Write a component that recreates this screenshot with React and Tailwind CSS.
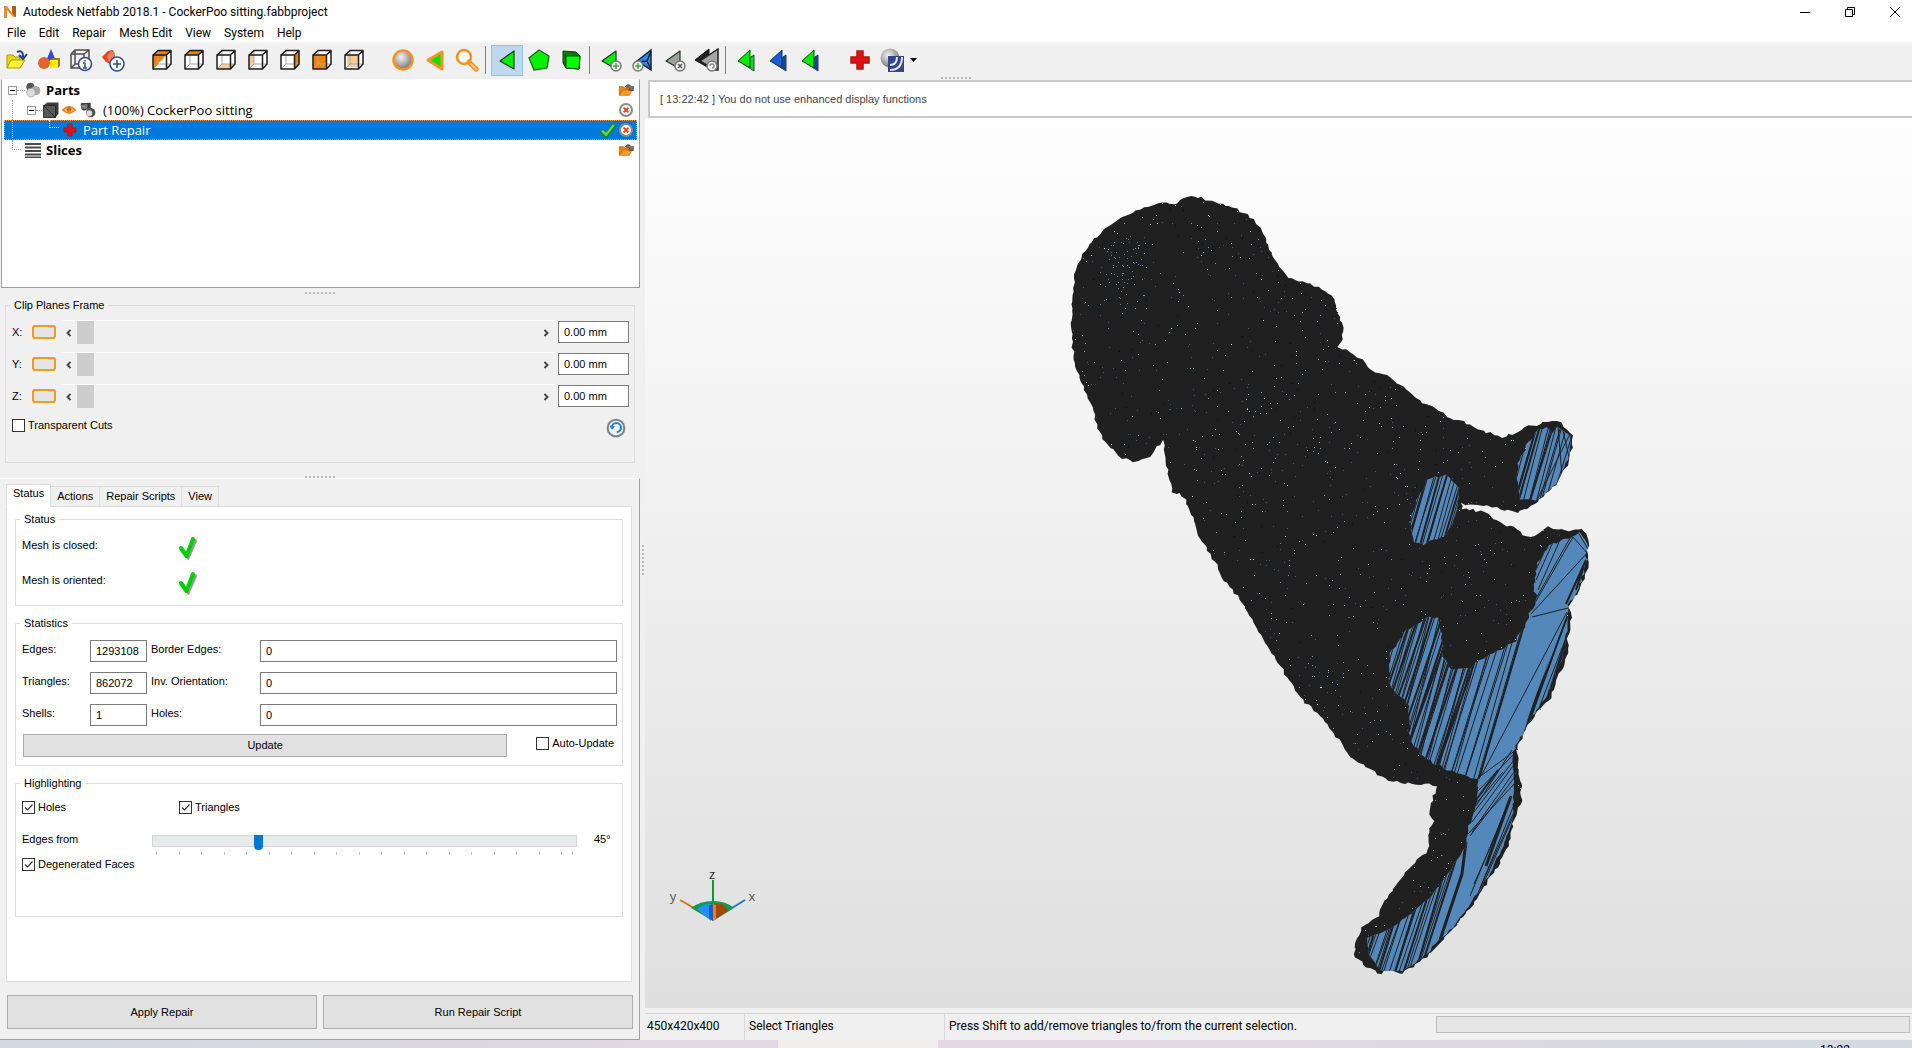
import { useState } from "react";
import clsx from "clsx";

const MENU = ["File", "Edit", "Repair", "Mesh Edit", "View", "System", "Help"];

// ---------------------------------------------------------------------------
// Mesh model
// ---------------------------------------------------------------------------

const OUTLINE = [
  [1192, 195], [1202, 198], [1215, 202], [1233, 207], [1248, 215], [1261, 228],
  [1268, 245], [1275, 260], [1288, 277], [1307, 283], [1322, 289], [1334, 299],
  [1338, 313], [1343, 327], [1343, 338], [1338, 346], [1352, 355], [1363, 360],
  [1372, 370], [1387, 376], [1403, 388], [1420, 401], [1433, 407], [1447, 416],
  [1467, 423], [1483, 431], [1502, 437], [1513, 434], [1525, 427], [1537, 425],
  [1547, 421], [1560, 423], [1567, 429], [1573, 436], [1572, 448], [1567, 465],
  [1558, 482], [1548, 492], [1538, 502], [1527, 509], [1517, 512], [1500, 509],
  [1483, 505], [1470, 505], [1462, 503], [1462, 509], [1473, 510], [1488, 513],
  [1500, 523], [1517, 529], [1527, 537], [1535, 536], [1547, 527], [1558, 530],
  [1570, 531], [1582, 529], [1588, 537], [1588, 550], [1589, 563], [1585, 580],
  [1575, 597], [1568, 608], [1571, 617], [1568, 640], [1567, 657], [1557, 677],
  [1551, 697], [1538, 712], [1525, 730], [1517, 748], [1518, 767], [1521, 787],
  [1522, 800], [1513, 823], [1507, 850], [1493, 873], [1480, 895], [1463, 917],
  [1443, 940], [1427, 957], [1413, 967], [1403, 973], [1385, 971], [1382, 974],
  [1367, 967], [1355, 957], [1355, 943], [1362, 927], [1378, 917], [1382, 905],
  [1392, 892], [1405, 873], [1420, 857], [1428, 850], [1430, 828], [1434, 822],
  [1429, 810], [1435, 793], [1436, 785], [1420, 784], [1393, 782], [1370, 770],
  [1350, 757], [1340, 743], [1333, 730], [1317, 713], [1300, 697], [1272, 653],
  [1244, 606], [1225, 580], [1212, 558], [1198, 535], [1193, 517], [1185, 500],
  [1180, 494], [1172, 492], [1169, 477], [1164, 453], [1164, 441], [1158, 447],
  [1150, 457], [1133, 462], [1122, 458], [1105, 442], [1095, 420], [1092, 407],
  [1083, 387], [1076, 367], [1072, 343], [1071, 327], [1073, 300], [1076, 267],
  [1087, 247], [1105, 228], [1122, 217], [1147, 206], [1162, 203], [1178, 203],
  [1183, 198],
];

const FRONT_PAW = [
  [1547, 427], [1552, 433], [1558, 426], [1571, 436], [1570, 450], [1565, 467],
  [1557, 483], [1538, 500], [1520, 499], [1517, 480], [1518, 463], [1528, 443],
  [1538, 430],
];

const SECOND_PAW = [
  [1447, 474], [1459, 487], [1457, 513], [1445, 537], [1423, 544], [1415, 542],
  [1410, 523], [1417, 497], [1427, 480],
];

const BELLY = [
  [1430, 616], [1438, 618], [1442, 633], [1442, 657], [1453, 670], [1470, 668],
  [1487, 657], [1513, 643], [1523, 630], [1530, 613], [1538, 597], [1533, 590],
  [1538, 563], [1550, 545], [1573, 537], [1580, 533], [1587, 543], [1586, 567],
  [1577, 592], [1567, 608], [1567, 630], [1563, 657], [1548, 693], [1530, 720],
  [1516, 747], [1480, 778], [1467, 777], [1433, 763], [1412, 745], [1408, 720],
  [1408, 703], [1390, 687], [1390, 653], [1407, 630],
];

const TAIL = [
  [1516, 745], [1512, 755], [1514, 777], [1513, 817], [1505, 843], [1492, 870],
  [1473, 900], [1453, 927], [1427, 953], [1403, 971], [1380, 970], [1368, 953],
  [1368, 938], [1397, 925], [1430, 898], [1453, 867], [1465, 847], [1468, 830],
  [1477, 800], [1478, 777],
];

// small deterministic generator, so that the model is the same on every render
const rng = (seed) => () => {
  seed = (seed * 1664525 + 1013904223) % 4294967296;
  return seed / 4294967296;
};

const toPath = (pts) => "M" + pts.map((p) => p.join(" ")).join("L") + "Z";

const roughen = (pts, amount, seed) => {
  const rand = rng(seed);
  const out = [];
  pts.forEach(([x, y], i) => {
    const [nx, ny] = pts[(i + 1) % pts.length];
    const steps = Math.max(1, Math.round(Math.hypot(nx - x, ny - y) / 4));
    for (let s = 0; s < steps; s++) {
      const t = s / steps;
      out.push([
        Math.round((x + (nx - x) * t + (rand() - 0.5) * amount) * 10) / 10,
        Math.round((y + (ny - y) * t + (rand() - 0.5) * amount) * 10) / 10,
      ]);
    }
  });
  return out;
};

const inside = (pts, x, y) => {
  let hit = false;
  for (let i = 0, j = pts.length - 1; i < pts.length; j = i++) {
    const [xi, yi] = pts[i];
    const [xj, yj] = pts[j];
    if (yi > y !== yj > y && x < ((xj - xi) * (y - yi)) / (yj - yi) + xi) {
      hit = !hit;
    }
  }
  return hit;
};

// slanted edges between two heights; x0..x1 is measured on the top edge
const slants = (x0, x1, y0, y1, lean, step, seed) => {
  const rand = rng(seed);
  let d = "";
  for (let x = x0; x < x1; x += step * (0.4 + rand() * 1.3)) {
    const run = (y1 - y0) * (lean + (rand() - 0.5) * 0.05);
    d += `M${x.toFixed(1)} ${y0}L${(x - run).toFixed(1)} ${y1}`;
  }
  return d;
};

const speckles = (count, seed, box) => {
  const rand = rng(seed);
  const blues = [FRONT_PAW, SECOND_PAW, BELLY, TAIL];
  let d = "";
  for (let i = 0; i < count; i++) {
    const x = Math.round(box[0] + rand() * box[2]);
    const y = Math.round(box[1] + rand() * box[3]);
    if (inside(OUTLINE, x, y) && !blues.some((b) => inside(b, x, y))) {
      d += `M${x} ${y}h1v1h-1z`;
    }
  }
  return d;
};

const OUTLINE_PATH = toPath(roughen(OUTLINE, 2.6, 7));
const REGIONS = [
  { id: "front", path: toPath(roughen(FRONT_PAW, 2, 3)) },
  { id: "second", path: toPath(roughen(SECOND_PAW, 3, 4)) },
  { id: "belly", path: toPath(roughen(BELLY, 3, 5)) },
  { id: "tail", path: toPath(roughen(TAIL, 2, 6)) },
];

const BOX = [1070, 195, 520, 780];

function Model() {
  return (
    <g>
      <defs>
        {REGIONS.map((r) => (
          <clipPath key={r.id} id={`clip-${r.id}`}>
            <path d={r.path} />
          </clipPath>
        ))}
        <clipPath id="clip-belly-left">
          <path d="M1380 610H1528L1478 780H1380Z" />
        </clipPath>
        <clipPath id="clip-belly-right">
          <path d="M1568 612L1600 612V760H1514L1534 700Z" />
        </clipPath>
      </defs>
      <path d={OUTLINE_PATH} fill="#202020" />
      <g shapeRendering="crispEdges">
        <path d={speckles(1200, 11, BOX)} fill="#34597c" />
        <path d={speckles(800, 23, BOX)} fill="#6c9cc6" />
        <path d={speckles(650, 37, BOX)} fill="#bfe6f5" />
        <path d={speckles(40, 41, [1110, 236, 32, 46])} fill="#4d7eae" />
        <path d={speckles(25, 47, [1100, 250, 30, 54])} fill="#4d7eae" />
        <path d={speckles(30, 43, [1240, 390, 120, 70])} fill="#74a8d0" />
        <path d={speckles(320, 59, BOX)} fill="#0b0b0b" />
      </g>
      {REGIONS.map((r) => (
        <path key={r.id} d={r.path} fill="#5488ba" />
      ))}

      <g stroke="#202020" fill="none">
        <g clipPath="url(#clip-front)">
          <path d={slants(1526, 1566, 422, 504, 0.28, 4, 5)} />
          <path d={slants(1538, 1562, 422, 504, 0.3, 8, 8)} strokeWidth="2" />
          <path d="M1562 426L1570 462M1558 426L1562 476M1570 434L1536 502" />
          <path d={slants(1562, 1600, 422, 504, 0.3, 6, 2)} />
        </g>
        <g clipPath="url(#clip-second)">
          <path d={slants(1422, 1490, 472, 546, 0.3, 4, 9)} />
          <path d={slants(1428, 1480, 472, 546, 0.3, 14, 12)} strokeWidth="2" />
        </g>
        <g clipPath="url(#clip-belly)">
          <g clipPath="url(#clip-belly-left)">
            <path d={slants(1396, 1530, 612, 782, 0.3, 4, 15)} />
            <path d={slants(1400, 1500, 612, 782, 0.34, 9, 17)} strokeWidth="2" />
            <path d={slants(1430, 1480, 612, 782, 0.26, 8, 19)} />
          </g>
          <g clipPath="url(#clip-belly-right)">
            <path d={slants(1560, 1620, 612, 760, 0.4, 4, 21)} />
            <path d={slants(1564, 1620, 612, 760, 0.34, 6, 22)} strokeWidth="2" />
          </g>
          <path d="M1527 615L1478 782" strokeWidth="2" />
          <path d="M1567 612L1480 778M1532 617L1568 608" />
          <path d="M1573 537L1532 608M1588 552L1531 614M1573 537L1587 553M1578 532L1588 549" />
          <path d="M1560 540L1538 590M1553 542L1536 580M1547 546L1536 570M1570 538L1534 602" />
          <path d="M1586 560L1566 604M1584 566L1576 590M1533 565V596" strokeWidth="2" />
        </g>
        <g clipPath="url(#clip-tail)">
          <path d="M1516 750L1478 778M1514 754L1477 792M1514 760L1474 812M1513 766L1472 822M1512 750L1476 806" />
          <path d="M1514 772L1472 832M1514 778L1470 836M1514 784L1468 834M1503 772L1474 806" />
          <path d="M1498 770L1476 800" strokeWidth="2" />
          <path d="M1511 796L1486 866" strokeWidth="3" />
          <path d="M1511 796L1470 896M1504 816L1474 884M1514 812L1480 888" />
          <path d={slants(1516, 1530, 800, 920, 0.42, 4, 25)} />
          <path d="M1466 842L1462 874L1440 940" strokeWidth="3" />
          <path d={slants(1396, 1464, 842, 976, 0.34, 4, 27)} />
          <path d={slants(1400, 1466, 842, 976, 0.3, 12, 29)} strokeWidth="2" />
        </g>
      </g>
    </g>
  );
}

function AxisGizmo() {
  return (
    <g>
      <path d="M680 900L694 908" stroke="#d9730d" strokeWidth="2" />
      <path d="M745 900L732 908" stroke="#1f78c1" strokeWidth="2" />
      <path d="M691 908Q700 901 713 901Q726 901 734 908L713 921Z" fill="#149a50" />
      <path d="M697 909Q703 904 711 904V921Z" fill="#1e90ff" />
      <path d="M709 905H713V921L709 918Z" fill="#1560bd" />
      <path d="M713 904H722Q726 907 728 911L714 920Z" fill="#a04808" />
      <path d="M713 904L716 905V919L713 921Z" fill="#ff7a0f" />
      <path d="M713 880V904" stroke="#149440" strokeWidth="2" />
      <g fontFamily="Open Sans, sans-serif" fontSize="13" fill="#555555" textAnchor="middle">
        <text x="673" y="901">y</text>
        <text x="752" y="901">x</text>
        <text x="712" y="879" fill="#222222">z</text>
      </g>
    </g>
  );
}

// ---------------------------------------------------------------------------
// Icons
// ---------------------------------------------------------------------------

function Icon({ children, className }) {
  return (
    <svg viewBox="0 0 24 24" className={clsx("shrink-0", className || "size-6")} aria-hidden="true">
      {children}
    </svg>
  );
}

const Cube = ({ face }) => (
  <Icon>
    <path d="M3 7L8 2.5H21V16L16.500 21H3Z" fill="#ffffff" />
    {face}
    <path d="M8 3V16M8 16H21M8 16L3 21" stroke="#a9a9b4" strokeWidth="1" fill="none" />
    <path d="M3 7H16.500V21H3ZM3 7L8 2.500H21L16.500 7M21 2.500V16L16.500 21" stroke="#1d1d1d" strokeWidth="1.500" fill="none" strokeLinejoin="round" />
  </Icon>
);

const Triangle = ({ fill = "#00f000" }) => (
  <path d="M3 13L17 3V21Z" fill={fill} stroke="#1c3a1c" strokeWidth="1.200" strokeLinejoin="round" />
);

const Badge = ({ cx = 17, sign, color = "#38a838" }) => (
  <g>
    <circle cx={cx} cy="18" r="5" fill="#f4f4f4" stroke="#777777" strokeWidth="1.500" />
    <path d={sign} stroke={color} strokeWidth="1.500" fill="none" />
  </g>
);

const Layers = ({ front, back }) => (
  <Icon>
    <path d="M7 15L19 7V23Z" fill={back} stroke="#26365a" />
    <path d="M3 13L15 2V20Z" fill={front} stroke="#203820" strokeLinejoin="round" />
  </Icon>
);

const RedCross = ({ className }) => (
  <Icon className={className}>
    <path d="M9 3H15V9H21V15H15V21H9V15H3V9H9Z" fill="#e80f0f" stroke="#a51a1a" strokeWidth="1.500" />
  </Icon>
);

const FILE_TOOLS = [
  {
    name: "Open",
    icon: (
      <Icon>
        <path d="M2 20V7H8L10 9H15V12" fill="#e6d800" stroke="#a79c00" />
        <path d="M2 20L6 12H20L15 20Z" fill="#fff23a" stroke="#a79c00" />
        <path d="M12 4Q18 1 18 9M14 7L18 11L22 6" stroke="#23408f" strokeWidth="2" fill="none" />
      </Icon>
    ),
  },
  {
    name: "Add primitive",
    icon: (
      <Icon>
        <path d="M14 1L19 13H9Z" fill="#3a49d6" />
        <circle cx="7" cy="15" r="6" fill="#e2662a" />
        <path d="M13 12L16 10H23V18L21 20H13Z" fill="#8c8400" />
        <path d="M13 12H21V20H13Z" fill="#ffee00" />
      </Icon>
    ),
  },
  {
    name: "Part info",
    icon: (
      <Icon>
        <path d="M2 6L6 2H20V12M2 6H15V12M2 6V20H12M6 2V16L2 20M15 6L20 2M6 16H12" fill="none" stroke="#4d4d4d" strokeWidth="1.500" />
        <circle cx="16" cy="16" r="6.500" fill="#ffffff" stroke="#34488f" strokeWidth="1.500" />
        <path d="M16 15V20M14 15H16M14 20H18M16 12V13.500" stroke="#34488f" strokeWidth="1.500" />
      </Icon>
    ),
  },
  {
    name: "New part",
    icon: (
      <Icon>
        <path d="M1 9L7 3L12 2L14 8L10 16L5 14Z" fill="#e2451f" />
        <path d="M6 8L10 3L14 5L11 14L7 13Z" fill="#f07e5c" />
        <circle cx="16" cy="16" r="7" fill="#ffffff" stroke="#34488f" strokeWidth="1.500" />
        <path d="M16 12V20M12 16H20" stroke="#34488f" strokeWidth="1.500" />
      </Icon>
    ),
  },
];

const VIEW_TOOLS = [
  { name: "Isometric", icon: <Cube face={<path d="M3 7H16.500L3 21ZM3 7L8 2.500H21L16.500 7Z" fill="#ee7f10" />} /> },
  { name: "Top", icon: <Cube face={<path d="M3 7L8 2.500H21L16.500 7Z" fill="#ee7f10" />} /> },
  { name: "Bottom", icon: <Cube face={<path d="M3 21L8 16H21L16.500 21Z" fill="#fbc995" />} /> },
  { name: "Left", icon: <Cube face={<path d="M3 7L8 2.500V16L3 21Z" fill="#fbc995" />} /> },
  { name: "Right", icon: <Cube face={<path d="M16.500 7L21 2.500V16L16.500 21Z" fill="#ee7f10" />} /> },
  { name: "Front", icon: <Cube face={<path d="M3 7H16.500V21H3Z" fill="#f58200" />} /> },
  { name: "Back", icon: <Cube face={<path d="M5 7H16.500V19H5Z" fill="#fbc995" />} /> },
];

const ZOOM_TOOLS = [
  {
    name: "Zoom all",
    icon: (
      <Icon>
        <circle cx="12" cy="12" r="9.500" fill="url(#ball)" stroke="#f7921e" strokeWidth="2.500" />
      </Icon>
    ),
  },
  {
    name: "Zoom selection",
    icon: (
      <Icon>
        <path d="M5 12L19 4V21Z" fill="#00e600" stroke="#f7921e" strokeWidth="3" strokeLinejoin="round" />
      </Icon>
    ),
  },
  {
    name: "Zoom",
    icon: (
      <Icon>
        <circle cx="9" cy="9" r="7" fill="#ffffff" stroke="#f7921e" strokeWidth="2.500" />
        <path d="M14 14L21 21" stroke="#f7921e" strokeWidth="5" strokeLinecap="round" />
        <path d="M16 16L21 21" stroke="#ffc57a" strokeWidth="2" strokeLinecap="round" />
      </Icon>
    ),
  },
];

const SELECT_TOOLS = [
  { name: "Select triangles", active: true, icon: <Icon><g transform="translate(2 0)"><Triangle /></g></Icon> },
  {
    name: "Select surfaces",
    icon: (
      <Icon>
        <path d="M12 2L22 8L20 20L7 22L2 10Z" fill="#00f000" stroke="#1c5a1c" strokeWidth="1.200" />
      </Icon>
    ),
  },
  {
    name: "Select shells",
    icon: (
      <Icon>
        <path d="M4 3L17 4L21 8L20 21L7 20L4 15Z" fill="#0a7a0a" stroke="#0d3a0d" />
        <path d="M7 8L21 8L20 21L7 20Z" fill="#00ff00" stroke="#0d4a0d" />
      </Icon>
    ),
  },
];

const EDIT_TOOLS = [
  { name: "Grow selection", icon: <Icon><Triangle /><Badge sign="M17 15V21M14 18H20" /></Icon> },
  {
    name: "Add node",
    icon: (
      <Icon>
        <path d="M6 13L20 2V22Z" fill="#2a8be8" stroke="#14253d" strokeWidth="1.500" />
        <path d="M20 3L16 13L20 21M16 13L7 14" stroke="#14253d" fill="none" strokeWidth="1.500" />
        <Badge cx={7} sign="M7 15V21M4 18H10" />
      </Icon>
    ),
  },
  { name: "Remove triangles", icon: <Icon><Triangle fill="#a0a0a0" /><Badge sign="M15 16L19 20M19 16L15 20" color="#555555" /></Icon> },
  {
    name: "Invert",
    icon: (
      <Icon>
        <path d="M0 12L14 1V20Z" fill="#222222" stroke="#111111" strokeLinejoin="round" />
        <path d="M5 13L23 1V22H20Z" fill="#a6a6a6" stroke="#222222" strokeWidth="1.500" />
        <Badge sign="M15 18A2 2 0 1 1 17 20" color="#888888" />
      </Icon>
    ),
  },
];

const LAYER_TOOLS = [
  { name: "Show selection", icon: <Layers front="#00ee00" back="#19d819" /> },
  { name: "Show part", icon: <Layers front="#0f5fe0" back="#1448a8" /> },
  { name: "Show both", icon: <Layers front="#00ee00" back="#1448a8" /> },
];

const Folder = () => (
  <Icon className="size-4">
    <path d="M2 20V7H8L10 9H19V12" fill="#e58315" stroke="#a55a00" />
    <path d="M2 20L7 12H21L17 20Z" fill="#ff9a2a" stroke="#b96500" />
    <path d="M11 7Q14 2 18 5L21 8L23 6V13L16 12L18 10Q16 7 13 8Z" fill="#777777" stroke="#333333" />
  </Icon>
);

const CloseCircle = () => (
  <Icon className="size-4">
    <circle cx="12" cy="12" r="9" fill="#ffffff" stroke="#8b8b8b" strokeWidth="3" />
    <path d="M8.500 8.500L15.500 15.500M15.500 8.500L8.500 15.500" stroke="#e8430e" strokeWidth="3" />
  </Icon>
);

const BigCheck = () => (
  <svg viewBox="0 0 20 24" className="h-6 w-5" role="img" aria-label="OK">
    <path d="M4 14L10 21L17 5" stroke="#999999" strokeWidth="4" fill="none" strokeLinecap="round" />
    <path d="M3 12L8.500 20L15 3" stroke="#00d000" strokeWidth="4" fill="none" strokeLinecap="round" strokeLinejoin="round" />
  </svg>
);

// ---------------------------------------------------------------------------
// Building blocks
// ---------------------------------------------------------------------------

function ToolGroup({ tools }) {
  return (
    <div className="flex">
      {tools.map((t) => (
        <button
          key={t.name}
          type="button"
          aria-label={t.name}
          className={clsx(
            "flex h-[31px] w-8 items-center justify-center border",
            t.active ? "border-[#92c4ea] bg-[#bcd9f0]" : "border-transparent"
          )}
        >
          {t.icon}
        </button>
      ))}
    </div>
  );
}

const Separator = () => <div className="h-7 w-px bg-[#858585]" />;

function Grip({ vertical }) {
  return (
    <div
      className={clsx(
        "flex gap-0.5",
        vertical ? "flex-col" : "justify-center"
      )}
    >
      {Array.from({ length: 8 }, (_, i) => (
        <span key={i} className="size-0.5 bg-[#b8b8b8]" />
      ))}
    </div>
  );
}

function Check({ label, defaultChecked, className }) {
  return (
    <label className={clsx("flex items-center gap-[3px] leading-[18px]", className)}>
      <span className="relative block size-[13px]">
        <input
          type="checkbox"
          defaultChecked={defaultChecked}
          className="peer block size-[13px] appearance-none border border-[#333333] bg-white"
        />
        <svg viewBox="0 0 13 13" className="pointer-events-none absolute inset-0 hidden size-[13px] peer-checked:block">
          <path d="M3 6.500L5.500 9L10.500 3.500" stroke="#333333" strokeWidth="1.200" fill="none" />
        </svg>
      </span>
      {label}
    </label>
  );
}

function Group({ title, className, children }) {
  return (
    <fieldset className={clsx("border border-[#dcdcdc]", className)}>
      <legend className="-ml-0.5 px-1 leading-[14px]">{title}</legend>
      {children}
    </fieldset>
  );
}

function ClipRow({ axis }) {
  return (
    <div className="flex h-6 items-center">
      <span className="w-5 leading-[18px]">{axis}:</span>
      <button
        type="button"
        aria-label={`Toggle ${axis} plane`}
        className="h-[14px] w-6 rounded-[3px] border-2 border-[#f39a1c] bg-[#e4e4e4]"
      />
      <div className="ml-1 flex h-6 flex-1 items-center border-t border-white">
        <button type="button" aria-label={`${axis} less`} className="flex w-[17px] justify-center">
          <svg viewBox="0 0 8 10" className="h-2 w-1.5">
            <path d="M6 1L2 5L6 9" stroke="#444444" strokeWidth="2.500" fill="none" />
          </svg>
        </button>
        <input
          type="range"
          aria-label={`${axis} clip position`}
          min="0"
          max="100"
          defaultValue="0"
          className="h-[23px] min-w-0 flex-1 appearance-none bg-transparent [&::-webkit-slider-thumb]:h-[23px] [&::-webkit-slider-thumb]:w-[17px] [&::-webkit-slider-thumb]:appearance-none [&::-webkit-slider-thumb]:bg-[#cdcdcd]"
        />
        <button type="button" aria-label={`${axis} more`} className="flex w-[17px] justify-center">
          <svg viewBox="0 0 8 10" className="h-2 w-1.5">
            <path d="M2 1L6 5L2 9" stroke="#444444" strokeWidth="2.500" fill="none" />
          </svg>
        </button>
      </div>
      <input
        type="text"
        aria-label={`${axis} clip value`}
        defaultValue="0.00 mm"
        className="ml-1 h-[22px] w-[71px] border border-[#7a7a7a] bg-white px-[5px]"
      />
    </div>
  );
}

function Stat({ id, label, value, second }) {
  return (
    <>
      <label htmlFor={id} className={clsx("leading-[18px]", second && "pl-1")}>
        {label}
      </label>
      <input
        id={id}
        type="text"
        readOnly
        value={value}
        className="h-[22px] w-full min-w-0 border border-[#7a7a7a] bg-white px-[5px]"
      />
    </>
  );
}

// ---------------------------------------------------------------------------
// Panels
// ---------------------------------------------------------------------------

function TitleBar() {
  return (
    <header className="bg-white">
      <div className="flex h-6 items-center">
        <svg viewBox="0 0 16 16" className="ml-0.5 size-4" aria-hidden="true">
          <path d="M2 14V2H5L10 9V2H14V13H11L5 6V14Z" fill="#e58a35" />
          <path d="M10 2H14V13L10 9Z" fill="#b35a12" />
        </svg>
        <h1 className="ml-[5px] flex-1">Autodesk Netfabb 2018.1 - CockerPoo sitting.fabbproject</h1>
        <button type="button" aria-label="Minimize" className="flex h-5 w-[45px] items-center justify-center">
          <svg viewBox="0 0 10 10" className="size-[10px]"><path d="M0 5.500H10" stroke="#000000" /></svg>
        </button>
        <button type="button" aria-label="Restore" className="flex h-5 w-[45px] items-center justify-center">
          <svg viewBox="0 0 10 10" className="size-[10px]" fill="none" stroke="#000000">
            <path d="M0.500 2.500H7.500V9.500H0.500ZM2.500 2.500V0.500H9.500V7.500H7.500" />
          </svg>
        </button>
        <button type="button" aria-label="Close" className="mr-[-5px] flex h-5 w-[45px] items-center justify-center">
          <svg viewBox="0 0 10 10" className="size-[10px]"><path d="M0 0L10 10M10 0L0 10" stroke="#000000" /></svg>
        </button>
      </div>
      <nav className="flex h-[17px] items-center gap-[13px] pl-[7px]">
        {MENU.map((m) => (
          <button key={m} type="button">
            {m}
          </button>
        ))}
      </nav>
    </header>
  );
}

function Toolbar() {
  return (
    <div className="relative flex h-[38px] items-center border-t-2 border-[#f8f8f8] pb-0.5 pl-px">
      <svg className="size-0" aria-hidden="true">
        <defs>
          <radialGradient id="ball" cx="0.4" cy="0.35" r="0.7">
            <stop offset="0" stopColor="#f2f2f2" />
            <stop offset="1" stopColor="#6f6f6f" />
          </radialGradient>
        </defs>
      </svg>
      <ToolGroup tools={FILE_TOOLS} />
      <div className="ml-[17px]">
        <ToolGroup tools={VIEW_TOOLS} />
      </div>
      <div className="ml-[17px] mr-0.5">
        <ToolGroup tools={ZOOM_TOOLS} />
      </div>
      <Separator />
      <div className="ml-[5px] mr-0.5">
        <ToolGroup tools={SELECT_TOOLS} />
      </div>
      <Separator />
      <div className="ml-[5px] mr-0.5">
        <ToolGroup tools={EDIT_TOOLS} />
      </div>
      <Separator />
      <div className="ml-[5px]">
        <ToolGroup tools={LAYER_TOOLS} />
      </div>
      <button type="button" aria-label="Repair part" className="ml-[17px] flex h-[31px] w-8 items-center justify-center">
        <RedCross className="size-6" />
      </button>
      <button type="button" aria-label="Display mode" className="flex h-[31px] items-center gap-1.5 pl-1">
        <Icon>
          <circle cx="10" cy="10" r="9.500" fill="url(#ball)" />
          <path d="M8 8H24V24H8Z" fill="#33458c" />
          <path d="M10 17Q17 17 17 9M10 22Q22 22 22 9" stroke="#e4e8f5" strokeWidth="2" fill="none" />
        </Icon>
        <svg viewBox="0 0 7 4" className="h-1 w-[7px]"><path d="M0 0H7L3.500 4Z" fill="#000000" /></svg>
      </button>
      <div className="absolute inset-x-0 bottom-0">
        <Grip />
      </div>
    </div>
  );
}

const Expander = () => (
  <button type="button" aria-label="Collapse" className="size-[9px] shrink-0 border border-[#9a9a9a] bg-white">
    <svg viewBox="0 0 7 7" className="size-[7px]"><path d="M1 3.500H6" stroke="#000000" /></svg>
  </button>
);

function PartsTree() {
  return (
    <ul className="h-[209px] border border-[#9c9c9c] border-t-transparent bg-white px-0.5 text-[13px] leading-5">
      <li className="flex h-5 items-center pl-1 pr-[3px]">
        <Expander />
        <span className="w-2 border-t border-dotted border-[#a0a0a0]" />
        <Icon className="size-4">
          <circle cx="8" cy="7" r="6" fill="#555555" />
          <circle cx="16" cy="13" r="7" fill="#a8a8a8" />
          <circle cx="9" cy="16" r="6.500" fill="#dcdcdc" stroke="#9a9a9a" />
        </Icon>
        <b className="ml-[5px] flex-1">Parts</b>
        <Folder />
      </li>
      <li className="flex h-5 items-center pr-[3px]">
        <span className="h-5 w-[9px] border-r border-dotted border-[#a0a0a0]" />
        <span className="ml-[14px] flex items-center">
          <Expander />
        </span>
        <span className="w-1.5 border-t border-dotted border-[#a0a0a0]" />
        <Icon className="size-[18px]">
          <path d="M2 6L7 2H22V17L18 22H2Z" fill="#3c3c3c" />
          <path d="M2 6H18V22H2ZM2 6L18 22" fill="#585858" stroke="#222222" />
        </Icon>
        <Icon className="ml-0.5 h-4 w-3.5">
          <path d="M1 12Q12 1 23 12Q12 22 1 12Z" fill="#fbb366" stroke="#e8861a" strokeWidth="2.500" />
          <circle cx="12" cy="11" r="4" fill="#d06c06" />
        </Icon>
        <Icon className="ml-1 size-4">
          <path d="M1 2L16 1V9L6 13L2 11Z" fill="#3a3a3a" />
          <path d="M1 5L11 3V10H3Z" fill="#828282" />
          <circle cx="16" cy="16" r="7" fill="#4e4e4e" />
          <circle cx="14" cy="17" r="4.500" fill="#dddddd" />
        </Icon>
        <span className="ml-[7px] flex-1">(100%) CockerPoo sitting</span>
        <CloseCircle />
      </li>
      <li className="flex h-5 items-center bg-[#0078d7] pr-[3px] text-white outline-1 -outline-offset-1 outline-dotted outline-[#e39a52]">
        <span className="h-5 w-[9px] border-r border-dotted border-[#c0d8f0]" />
        <span className="ml-9 h-2 w-[10px] self-start border-b border-l border-dotted border-white" />
        <RedCross className="ml-[3px] size-4" />
        <span className="ml-[5px] flex-1">Part Repair</span>
        <Icon className="mr-0.5 size-4">
          <path d="M2 13L9 20L22 4" stroke="#2c7a16" strokeWidth="6" fill="none" />
          <path d="M3 13L9 19L21 4" stroke="#5fdc3a" strokeWidth="3.500" fill="none" />
        </Icon>
        <CloseCircle />
      </li>
      <li className="flex h-5 items-center pr-[3px]">
        <span className="h-2.5 w-[17px] self-start pl-2">
          <span className="block h-2.5 border-b border-l border-dotted border-[#a0a0a0]" />
        </span>
        <svg viewBox="0 0 16 15" className="ml-1 h-[15px] w-4" aria-hidden="true">
          <path d="M0 1H16M0 4.500H16M0 8H16M0 11.500H16M0 14.500H16" stroke="#4a4a4a" strokeWidth="2" />
        </svg>
        <b className="ml-[5px] flex-1">Slices</b>
        <Folder />
      </li>
    </ul>
  );
}

function ClipPlanes() {
  return (
    <Group title="Clip Planes Frame" className="mx-[5px] h-[165px] px-1.5 pr-[5px]">
      <div className="flex flex-col gap-2 pt-2">
        <ClipRow axis="X" />
        <ClipRow axis="Y" />
        <ClipRow axis="Z" />
        <div className="flex h-[22px] items-start justify-between pr-[3px]">
          <Check label="Transparent Cuts" />
          <button type="button" aria-label="Reset clip planes" className="self-end">
            <Icon className="size-5">
              <circle cx="12" cy="12" r="10" fill="#f2f2f2" stroke="#7d8690" strokeWidth="2.500" />
              <path d="M7 11A5.500 5.500 0 1 1 13 17" stroke="#1f86e0" strokeWidth="2.500" fill="none" />
              <path d="M4 9L7 14L11 10Z" fill="#1f86e0" />
            </Icon>
          </button>
        </div>
      </div>
    </Group>
  );
}

const TABS = ["Status", "Actions", "Repair Scripts", "View"];

function RepairPanel() {
  const [tab, setTab] = useState("Status");
  const [angle, setAngle] = useState(45);

  return (
    <section className="flex flex-1 flex-col border-b border-r border-t border-[#a0a0a0] border-t-white px-1.5 pt-[5px]">
      <div className="relative z-10 flex items-end" role="tablist">
        {TABS.map((t) => (
          <button
            key={t}
            type="button"
            role="tab"
            aria-selected={t === tab}
            onClick={() => setTab(t)}
            className={clsx(
              "border border-[#dcdcdc] px-1.5",
              t === tab
                ? "-mb-px h-[23px] border-b-white bg-white pb-1"
                : "h-5 border-b-0 border-l-0 bg-[#f0f0f0]"
            )}
          >
            {t}
          </button>
        ))}
      </div>

      <div className="mr-px flex-1 border border-[#dcdcdc] bg-white px-2 pt-[5px]">
        <Group title="Status" className="h-[94px] px-1.5">
          <dl className="grid grid-cols-[156px_1fr] gap-y-[11px] pt-2.5 leading-[18px]">
            <dt>Mesh is closed:</dt>
            <dd><BigCheck /></dd>
            <dt>Mesh is oriented:</dt>
            <dd><BigCheck /></dd>
          </dl>
        </Group>

        <Group title="Statistics" className="mt-2.5 h-[150px] pl-1.5 pr-[5px]">
          <div className="grid grid-cols-[68px_57px_113px_1fr] gap-y-2.5 pt-2.5">
            <Stat id="edges" label="Edges:" value="1293108" />
            <Stat id="border-edges" label="Border Edges:" value="0" second />
            <Stat id="triangles" label="Triangles:" value="862072" />
            <Stat id="inv-orientation" label="Inv. Orientation:" value="0" second />
            <Stat id="shells" label="Shells:" value="1" />
            <Stat id="holes" label="Holes:" value="0" second />
          </div>
          <div className="mt-2 flex items-start pl-px pr-[3px]">
            <button type="button" className="h-[23px] flex-1 border border-[#adadad] bg-[#e1e1e1]">
              Update
            </button>
            <Check label="Auto-Update" className="ml-[29px]" />
          </div>
        </Group>

        <Group title="Highlighting" className="mt-2.5 h-[141px] px-1.5">
          <div className="grid grid-cols-[157px_1fr] pt-2">
            <Check label="Holes" defaultChecked />
            <Check label="Triangles" defaultChecked />
          </div>
          <div className="mt-3.5 flex h-[25px] items-start leading-[18px]">
            <label htmlFor="edge-angle" className="w-[130px]">
              Edges from
            </label>
            <div className="flex-1 pt-[5px]">
              <input
                id="edge-angle"
                type="range"
                min="0"
                max="185"
                value={angle}
                onChange={(e) => setAngle(Number(e.target.value))}
                className="block h-3 w-full appearance-none border border-[#d6d6d6] bg-[#e7eaea] [&::-webkit-slider-thumb]:mt-[3px] [&::-webkit-slider-thumb]:h-[15px] [&::-webkit-slider-thumb]:w-[9px] [&::-webkit-slider-thumb]:appearance-none [&::-webkit-slider-thumb]:rounded-b-[4px] [&::-webkit-slider-thumb]:bg-[#0078d7]"
              />
              <svg viewBox="0 0 425 3" preserveAspectRatio="none" className="mt-[5px] h-[3px] w-full" aria-hidden="true">
                {[...Array(19).keys()].map((i) => (
                  <path key={i} d={`M${4.5 + Math.round(i * 22.5)} 0V3`} stroke="#bdbdbd" />
                ))}
                <path d="M420.500 0V3" stroke="#bdbdbd" />
              </svg>
            </div>
            <output htmlFor="edge-angle" className="ml-[17px] w-[22px]">
              {angle}°
            </output>
          </div>
          <Check label="Degenerated Faces" defaultChecked className="w-max" />
        </Group>
      </div>

      <div className="mb-2.5 mt-[13px] flex gap-1.5 pl-px">
        <button type="button" className="h-[34px] flex-1 border border-[#adadad] bg-[#e1e1e1]">
          Apply Repair
        </button>
        <button type="button" className="h-[34px] flex-1 border border-[#adadad] bg-[#e1e1e1]">
          Run Repair Script
        </button>
      </div>
    </section>
  );
}

function Viewport() {
  return (
    <div className="min-h-0 flex-1 bg-linear-to-b from-[#fefefe] to-[#dfdfdf]">
      <svg viewBox="645 118 1267 890" className="size-full" role="img" aria-label="CockerPoo sitting mesh">
        <Model />
        <AxisGizmo />
      </svg>
    </div>
  );
}

function StatusBar() {
  return (
    <footer className="mt-[5px] flex h-[27px] items-stretch border-t border-[#d4d4d4] leading-6">
      <span className="w-[100px] border-r border-[#dadada] pl-0.5">450x420x400</span>
      <span className="w-[200px] border-r border-[#dadada] pl-1">Select Triangles</span>
      <span className="flex-1 pl-1">Press Shift to add/remove triangles to/from the current selection.</span>
      <span className="mr-0.5 mt-0.5 h-[17px] w-[474px] border border-[#bcbcbc] bg-[#e6e6e6]" />
    </footer>
  );
}

export default function App() {
  return (
    <div className="flex h-screen min-h-[900px] flex-col overflow-hidden bg-[#f0f0f0] font-[Roboto,sans-serif] text-[12px] text-black">
      <TitleBar />
      <Toolbar />
      <main className="flex min-h-0 flex-1">
        <aside className="flex w-[640px] shrink-0 flex-col font-['Liberation_Sans',sans-serif] text-[11px]">
          <div className="pl-px font-['Open_Sans',sans-serif]">
            <PartsTree />
          </div>
          <div className="flex h-2.5 items-center justify-center">
            <Grip />
          </div>
          <ClipPlanes />
          <div className="flex h-[15px] items-end justify-center">
            <Grip />
          </div>
          <RepairPanel />
        </aside>
        <div className="flex w-[5px] shrink-0 items-center justify-center">
          <Grip vertical />
        </div>
        <div className="flex min-w-0 flex-1 flex-col">
          <div className="ml-[3px] mt-px flex h-[38px] items-center border-2 border-r-0 border-[#cacaca] bg-white pl-2.5 font-['Liberation_Sans',sans-serif] text-[11px] text-[#444444]">
            [ 13:22:42 ] You do not use enhanced display functions
          </div>
          <Viewport />
          <StatusBar />
        </div>
      </main>
      <div className="flex h-2 shrink-0 overflow-hidden bg-linear-to-r from-[#d2d8e0] via-[#e6d8e2] to-[#d3d9e0]">
        <div className="ml-[778px] w-40 bg-[#f2eeee]" />
        <time className="ml-auto mr-[62px] mt-0.5 text-[12px] leading-4">13:22</time>
      </div>
    </div>
  );
}
